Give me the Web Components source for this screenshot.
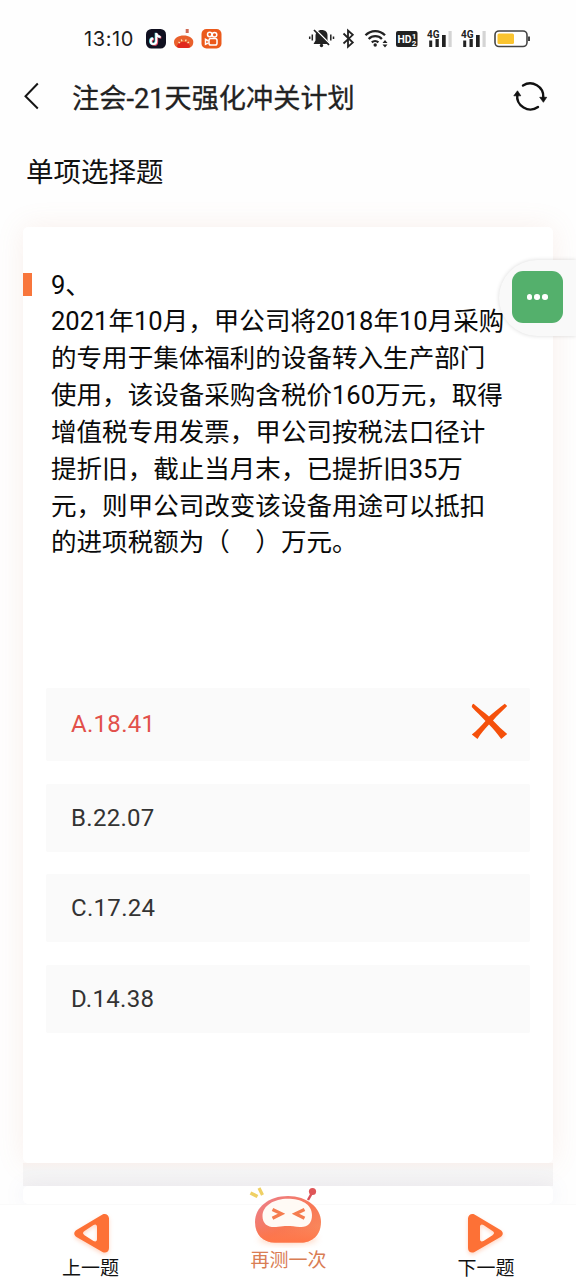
<!DOCTYPE html>
<html lang="zh-CN"><head><meta charset="utf-8"><title>注会-21天强化冲关计划</title>
<style>
html,body{margin:0;padding:0;width:576px;height:1280px;overflow:hidden;background:#fefefe}
body{font-family:Roboto,"Noto Sans CJK SC",sans-serif}
</style></head><body>
<quiz-app></quiz-app>
<script>
const define=(name,html)=>customElements.define(name,class extends HTMLElement{
  constructor(){super();this.attachShadow({mode:'open'}).innerHTML=html;}
});

define('status-bar',`<style>
:host{display:flex;height:76px;box-sizing:border-box;padding:0 46px 0 84px;align-items:center;color:#1c1c1c}
.time{line-height:24px;letter-spacing:.6px;width:61px;white-space:nowrap;font-family:Inter,sans-serif;font-size:20px;padding-top:2px}
svg{display:block;flex:none}
.sys{margin-left:auto}
</style>
<span class="time">13:10</span>
<svg width="80" height="28" viewBox="145 24 80 28">
<rect x="146" y="29" width="20" height="19.500" rx="5.500" fill="#101020"/>
<g fill="none" stroke-width="2.300"><path d="M156.300 33v8.300a2.800 2.800 0 1 1-3-2.800M156.300 33.500c.5 2.200 2.200 3.300 4.300 3.500" stroke="#e5506a" transform="translate(.7 .6)"/><path d="M156.300 33v8.300a2.800 2.800 0 1 1-3-2.800M156.300 33.500c.5 2.200 2.200 3.300 4.300 3.500" stroke="#5fd8dc" transform="translate(-.5 -.3)"/><path d="M156.300 33v8.300a2.800 2.800 0 1 1-3-2.800M156.300 33.500c.5 2.200 2.200 3.300 4.300 3.500" stroke="#fff" stroke-width="1.900"/></g>
<path d="M174 42c0-4 4.500-6.500 9.700-6.500S193.300 38 193.300 42c0 3.500-2.300 6-5.300 6h-8.500c-3 0-5.500-2.500-5.500-6z" fill="#e9602c"/><path d="M177 47c0-3 3-5 6.500-5s6.500 2 6.500 5l-2 1h-8.500z" fill="#e0261c"/><path d="M178.500 42l1.500 1M181.300 39.500l.7 1.800M186.200 39.500l-.7 1.800M189 42l-1.500 1" stroke="#ffe6c0" stroke-width="1.200"/><path d="M185.700 29h3v4h-3z" fill="#cf6a55"/>
<rect x="201.500" y="29" width="20" height="19.500" rx="5" fill="#eb5a1c"/>
<g fill="none" stroke="#fff" stroke-width="1.500"><circle cx="209.700" cy="34.500" r="2.200"/><circle cx="214.500" cy="34.800" r="2.300"/><rect x="209" y="38.500" width="8" height="6.500" rx="1.800"/><path d="M208.500 41l-3-1.700v5l3-1.500"/></g>
</svg>
<svg class="sys" width="222" height="28" viewBox="308 24 222 28">
<path d="M321.500 30c-3.600 0-6 2.500-6 6v4.500l-2 3.500h16L327.500 40v-4.500c0-3.300-2-5.500-6-5.500z" fill="#222"/><circle cx="321.500" cy="45.500" r="1.700" fill="#222"/><path d="M315.500 29.500l15 15" stroke="#fff" stroke-width="1.500"/><path d="M314 30l15 15" stroke="#222" stroke-width="1.700"/><path d="M312.300 34.500v6M309.700 36.500v2.500M330.800 34.500v6M333.500 36.500v2.500" stroke="#222" stroke-width="1.500"/>
<path d="M343.500 33.500l9.300 9-4.800 4.300V30.500l4.800 4.300-9.300 8.700" fill="none" stroke="#222" stroke-width="1.800"/>
<g fill="none" stroke="#222" stroke-width="2.300"><path d="M365.500 35.300a13.500 13.500 0 0 1 19.500 0"/><path d="M368.700 39a9.200 9.200 0 0 1 13.200 0"/><path d="M371.800 42.300a5 5 0 0 1 6.600 0"/></g><circle cx="375.200" cy="45" r="1.700" fill="#222"/><path d="M382.500 43l2.500-3 2.500 3zM382.500 44.500l2.500 3 2.500-3z" fill="#222"/>
<rect x="396" y="31" width="21.500" height="16" rx="2" fill="#222"/><text x="397.500" y="43.300" font-size="11.500" font-weight="700" fill="#fff" font-family="Roboto" textLength="14" lengthAdjust="spacingAndGlyphs">HD</text><text x="411.700" y="38.700" font-size="8" font-weight="700" fill="#fff" font-family="Roboto">1</text><text x="411.700" y="46.300" font-size="8" font-weight="700" fill="#fff" font-family="Roboto">2</text>
<g id="sig"><text x="427" y="38" font-size="11" font-weight="700" fill="#222" font-family="Roboto" textLength="12.500" lengthAdjust="spacingAndGlyphs">4G</text><path d="M429.200 40.500h3v6.500h-3zM435.500 39h3.300v8h-3.300zM442 35h3.700V47H442z" fill="#222"/><path d="M448.500 31h3.200v16h-3.200z" fill="#d4d4d4"/></g><use href="#sig" x="34"/>
<rect x="495" y="31" width="32" height="15.500" rx="4" fill="#fff" stroke="#444" stroke-width="1.600"/><path d="M529 36.500v4.500" stroke="#444" stroke-width="2"/><rect x="497.500" y="33.500" width="16.500" height="10.500" rx="1.500" fill="#fac42f"/>
</svg>`);

define('nav-bar',`<style>
:host{display:flex;height:44px;align-items:center;padding:0 27px 0 22px;color:#222}
h1{font-size:27.200px;font-weight:400;margin:2px auto 0 31px;line-height:44px;white-space:nowrap;-webkit-text-stroke:.3px #222}
svg{flex:none;display:block;margin-bottom:4px}
</style>
<svg width="19" height="40" viewBox="22 76 19 40"><path d="M37.800 83.500L25.500 96.300 37.800 108.500" fill="none" stroke="#151515" stroke-width="2"/></svg>
<h1><slot></slot></h1>
<svg width="36" height="40" viewBox="513 76 36 40"><g fill="none" stroke="#111" stroke-width="2.400" stroke-linecap="round"><path d="M523 85.500A13.200 13.200 0 0 1 543.300 97.500"/><path d="M538 107A13.200 13.200 0 0 1 517.300 94.500"/></g><path d="M539.700 97.300h7l-3.300 5zM513.800 95.800h7l-3.300-5z" fill="#111" stroke="#111" stroke-width=".7"/></svg>`);

define('question-text',`<style>
:host{display:block;padding:39.500px 0 0 28px;font-size:25.560px;line-height:36.850px;color:#0a0a0a;position:relative}
:host::before{content:"";position:absolute;left:0;top:46px;width:9px;height:23px;background:#f8763c}
::slotted(div){white-space:nowrap}
</style><slot></slot>`);

define('answer-option',`<style>
:host{display:flex;align-items:center;justify-content:space-between;height:68px;box-sizing:border-box;padding:0 22px 0 25px;background:#fafafa;border-radius:2px;color:#333;font-size:24px;letter-spacing:.3px}
:host([wrong]){height:73.500px;color:#e2504a}
svg{display:none}:host([wrong]) svg{display:block;margin-bottom:5px}
</style><span><slot></slot></span>
<svg width="38" height="40" viewBox="470 702 38 40"><path d="M473.500 703.800c5 4.500 10.500 8.500 15.500 12.700 5-4.500 10.500-8.700 15.800-12.700l2.400 2.200c-5 5-10 9.500-14.200 14.500 4.700 5 9.500 9.500 14.200 13.500l-6 5c-4-5.700-8-10-12.200-14.500-4.500 4.500-8.200 9-11.500 14.500l-5.700-4.500c5-4 9.700-8.700 13.700-13.500-4.500-4.700-9-9-13.700-14 0-1.700.7-2.900 1.700-3.200z" fill="#f5500b"/></svg>`);

define('quiz-card',`<style>
:host{display:flex;flex-direction:column;height:936px;width:530px;box-sizing:border-box;background:#fff;border-radius:5px;box-shadow:0 0 28px rgba(210,130,100,.12)}
.q{height:460.500px}
.opts{display:flex;flex-direction:column;gap:22.700px;padding:0 23px}
</style><div class="q"><slot name="question"></slot></div><div class="opts"><slot></slot></div>`);

define('chat-button',`<style>
:host{display:flex;align-items:center;box-sizing:border-box;width:77px;height:76px;padding:0 0 2px 12.500px;border-radius:38px 0 0 38px;background:#f9f9f9;box-shadow:0 0 4px rgba(0,0,0,.15)}
div{width:51.500px;height:51.500px;border-radius:11px;background:#54b06c;display:flex;align-items:center;justify-content:center;gap:2px}
i{width:5.600px;height:5.600px;border-radius:50%;background:#fff}
</style><div><i></i><i></i><i></i></div>`);

define('foot-item',`<style>
:host{display:flex;flex-direction:column;align-items:center;font-size:19px;line-height:24px;color:#111;white-space:nowrap}
svg{display:block;margin-bottom:4px;position:relative;left:1px;filter:drop-shadow(0 2px 2px rgba(255,120,60,.3))}
:host([next]) svg{transform:scaleX(-1);left:-1px}
</style><svg width="36" height="40" viewBox="74 1213 36 40"><path fill-rule="evenodd" d="M76.500 1230l26-15.500c3-1.500 6.500.5 6.500 4v29.500c0 4-3.500 5.500-6.500 4L76.500 1237c-3-2-3-5 0-7zM84.500 1231c-2 1.200-2 3 0 4.200l9 5.800c2 1 3.500.3 3.500-1.700v-12.500c0-2-1.500-3-3.500-1.700z" fill="#fd7136"/></svg><slot></slot>`);

define('retry-item',`<style>
:host{display:flex;flex-direction:column;align-items:center;font-size:19px;line-height:24px;color:#d97d54;white-space:nowrap}
svg{display:block;margin:0 2px 1px 0}
</style><svg width="82" height="64" viewBox="247 1184 82 64"><defs><linearGradient id="a" x1="0" y1="0" x2="1" y2="1"><stop stop-color="#eb8090"/><stop offset=".55" stop-color="#f87855"/><stop offset="1" stop-color="#fb9060"/></linearGradient><linearGradient id="b" x1="0" y1="0" x2="0" y2="1"><stop offset=".65" stop-color="#ff7548" stop-opacity="0"/><stop offset="1" stop-color="#ff7548"/></linearGradient><filter id="f" x="-30%" y="-50%" width="160%" height="200%"><feGaussianBlur stdDeviation="3"/></filter></defs>
<ellipse cx="288" cy="1239" rx="29" ry="5" fill="#ffb58f" opacity=".6" filter="url(#f)"/>
<path d="M250.500 1193l7 3.500" stroke="#efd064" stroke-width="3.500"/><path d="M259 1188l3.500 7" stroke="#efd064" stroke-width="3.200"/>
<path d="M308 1200l4.500-8" stroke="#d9515a" stroke-width="2.500"/><circle cx="312.500" cy="1191.500" r="3.600" fill="#df5658"/>
<path d="M288 1196c19 0 33 12 33 26 0 13-9 20.500-20 20.500h-26c-12 0-20-8-20-20.500 0-15 14-26 33-26z" fill="url(#a)"/><path d="M288 1196c19 0 33 12 33 26 0 13-9 20.500-20 20.500h-26c-12 0-20-8-20-20.500 0-15 14-26 33-26z" fill="url(#b)"/>
<path d="M287.500 1198.800c14 0 24.500 5.500 24.500 16.200 0 8.500-4.500 12.500-12 12-8-.7-13-1.700-22-.2-9 1.400-15.500-2.300-15.500-10.600 0-10.700 12-17.400 25-17.400z" fill="#fffaf5"/>
<path d="M272.500 1209.500l9 4.300-9 4.500M304.500 1209.500l-9 4.300 9 4.500" fill="none" stroke="#f57d50" stroke-width="3.300"/></svg><slot></slot>`);

define('bottom-bar',`<style>
:host{display:grid;grid-template-columns:181px 1fr 180px;height:76px;background:#fff;border-top:1px solid #fafafa;box-sizing:border-box;align-items:start}
foot-item{padding-top:7.500px}
retry-item{margin-top:-21px}
</style><foot-item>上一题</foot-item><retry-item>再测一次</retry-item><foot-item next>下一题</foot-item>`);

define('quiz-app',`<style>
:host{display:flex;flex-direction:column;width:576px;height:1280px;overflow:hidden;position:relative;background:#fefefe}
h2{font-size:27.500px;font-weight:400;line-height:40px;margin:33px 0 0 26px;color:#111}
main{flex:1;min-height:0;overflow:hidden;padding:34px 0 0 23px;display:flex;flex-direction:column}
quiz-card{flex:none}
.gap{flex:none;height:23px;width:530px;background:linear-gradient(#f8f1ee,#f5f5f5 35%,#f5f3f3)}
.next{width:530px;height:30px;border-radius:5px;background:#fff;box-shadow:0 0 20px rgba(120,130,190,.1)}
chat-button{position:absolute;right:0;top:260px}
bottom-bar{flex:none;position:relative}
</style>
<status-bar></status-bar><nav-bar>注会-21天强化冲关计划</nav-bar><h2>单项选择题</h2>
<main><quiz-card>
<question-text slot="question"><div>9、</div><div>2021年10月，甲公司将2018年10月采购</div><div>的专用于集体福利的设备转入生产部门</div><div>使用，该设备采购含税价160万元，取得</div><div>增值税专用发票，甲公司按税法口径计</div><div>提折旧，截止当月末，已提折旧35万</div><div>元，则甲公司改变该设备用途可以抵扣</div><div>的进项税额为（　）万元。</div></question-text>
<answer-option wrong>A.18.41</answer-option><answer-option>B.22.07</answer-option><answer-option>C.17.24</answer-option><answer-option>D.14.38</answer-option>
</quiz-card><div class="gap"></div><div class="next"></div></main>
<bottom-bar></bottom-bar><chat-button></chat-button>`);
</script></body></html>
